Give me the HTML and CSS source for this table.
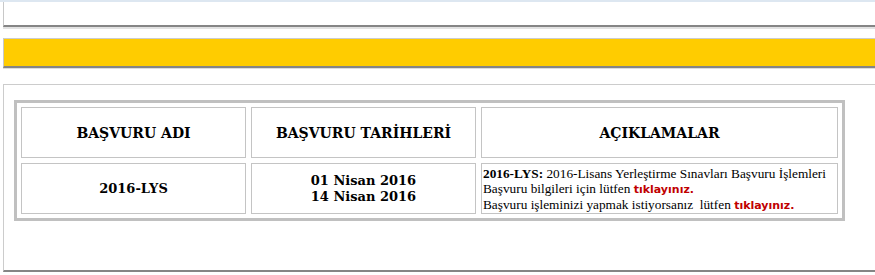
FILE: index.html
```html
<!DOCTYPE html>
<html lang="tr">
<head>
<meta charset="utf-8">
<title>Başvuru</title>
<link rel="stylesheet" href="styles.css">
</head>
<body>
<div class="topline"></div>
<div class="bar bar-white"></div>
<div class="bar bar-yellow"></div>
<div class="panel">
  <div class="grid">
    <div class="cell head">BAŞVURU ADI</div>
    <div class="cell head">BAŞVURU TARİHLERİ</div>
    <div class="cell head">AÇIKLAMALAR</div>
    <div class="cell val">2016-LYS</div>
    <div class="cell val">01 Nisan 2016<br>14 Nisan 2016</div>
    <div class="cell desc"><b>2016-LYS:</b> 2016-Lisans Yerleştirme Sınavları Başvuru İşlemleri<br>Başvuru bilgileri için lütfen <a class="link" href="#">tıklayınız.</a><br>Başvuru işleminizi yapmak istiyorsanız&nbsp; lütfen <a class="link" href="#">tıklayınız.</a></div>
  </div>
</div>
</body>
</html>
```
FILE: styles.css
```css
html, body {
  margin: 0;
  padding: 0;
  background: #ffffff;
  overflow: hidden;
}
body {
  font-family: "DejaVu Serif", "Liberation Serif", serif;
  color: #000;
}
.topline {
  height: 2px;
  background: #dde7f1;
}
.bar {
  margin-left: 3px;
  width: 900px;
  border-left: 1px solid #c8c8c8;
}
.bar-white {
  height: 23px;
  background: #fff;
  border-bottom: 2px solid #858585;
  box-shadow: 0 2px 0 #e2e2e2;
}
.bar-yellow {
  margin-top: 11px;
  height: 27px;
  background: #ffcc00;
  border-top: 1px solid #cccccc;
  border-bottom: 2px solid #858585;
  box-shadow: 0 1px 0 #dddddd;
}
.panel {
  margin-top: 16px;
  margin-left: 3px;
  width: 900px;
  height: 170px;
  border-top: 1px solid #cccccc;
  border-left: 1px solid #cccccc;
  border-bottom: 2px solid #858585;
  padding: 15px 0 0 10px;
}
.grid {
  display: grid;
  grid-template-columns: 225px 225px 357px;
  grid-auto-rows: 51px;
  gap: 5px;
  padding: 4px;
  border: 3px solid #c0c0c0;
  width: max-content;
}
.cell {
  box-sizing: border-box;
  border: 1px solid #c4c4c4;
  display: flex;
  flex-direction: column;
  justify-content: center;
}
.head {
  align-items: center;
  text-align: center;
  font-weight: bold;
  font-size: 14px;
}
.val {
  align-items: center;
  text-align: center;
  font-weight: bold;
  font-size: 13px;
  line-height: 16px;
}
.desc {
  display: block;
  padding: 2px 1px 0;
  font-family: "Liberation Serif", "DejaVu Serif", serif;
  font-size: 13.3px;
  line-height: 15px;
  white-space: nowrap;
}
.desc b {
  font-weight: bold;
}
.link {
  font-family: "DejaVu Sans", Verdana, sans-serif;
  font-weight: bold;
  font-size: 11px;
  color: #c00000;
  text-decoration: none;
}
```
